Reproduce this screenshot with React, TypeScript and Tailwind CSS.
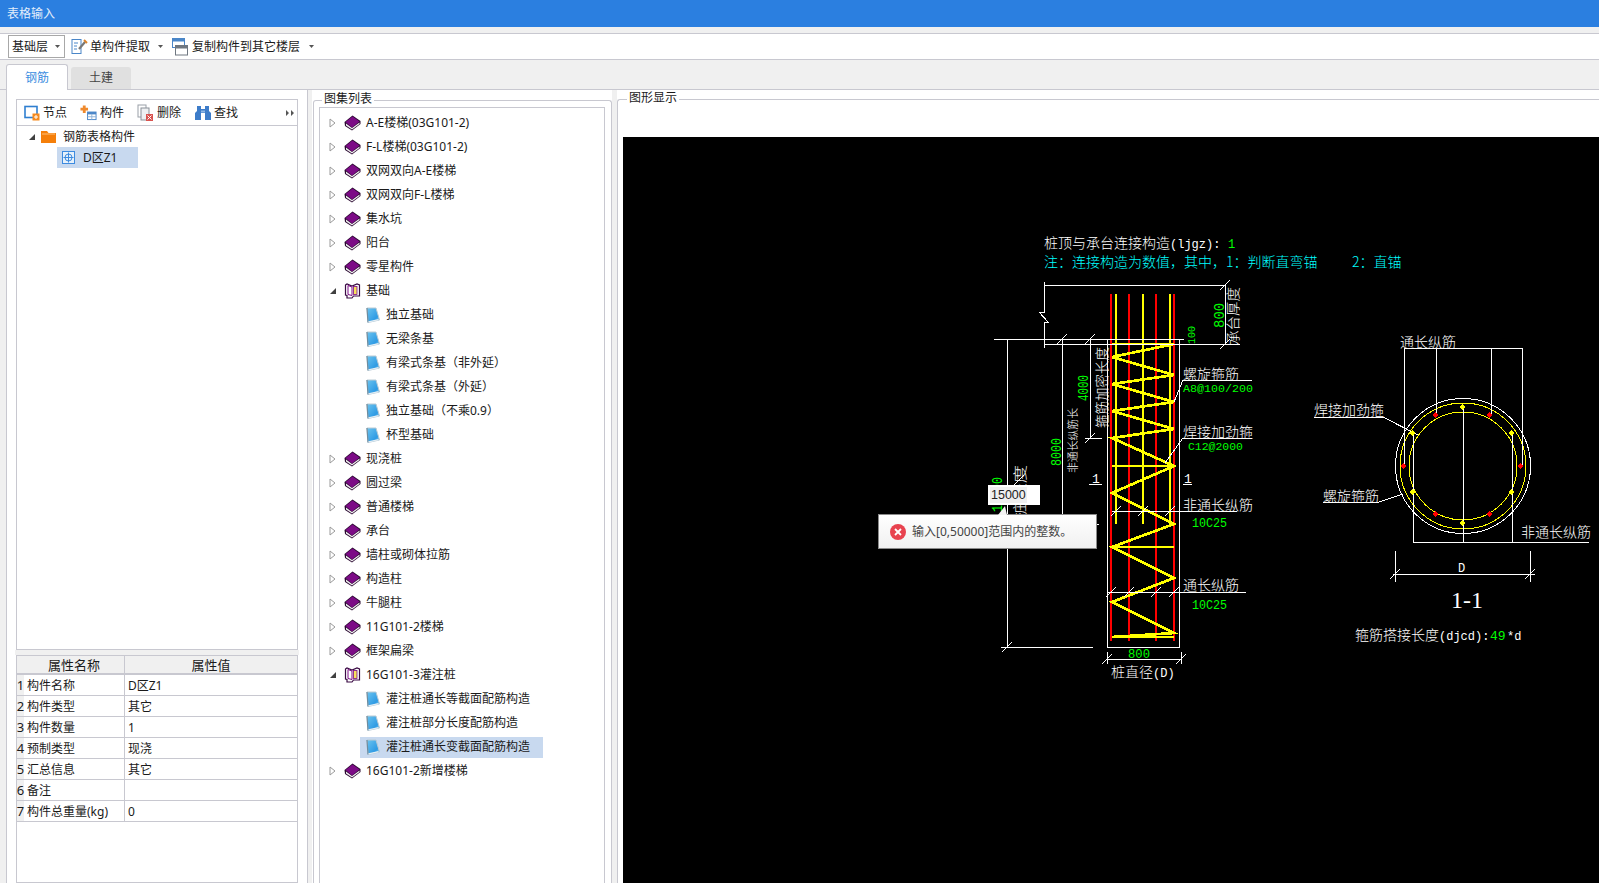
import React from 'react'

const uiFont = "font-['Noto_Sans','Noto_Sans_CJK_SC',sans-serif]"

const BookIcon = () => (
    <svg width="17" height="16" viewBox="0 0 17 16" className="shrink-0">
        <path d="M0.5 7 L8.5 0.5 L16.5 6 L16.5 9 L8 15.5 L1 11 Z" fill="#2a0a30" />
        <path d="M1.5 7 L8.5 1.5 L15.5 6.5 L8 12.5 Z" fill="#7c0b86" />
        <path d="M2 8.5 L8 13 L15.5 7.5 L15.5 9 L8 14.5 L2 10.5 Z" fill="#f2eef2" />
    </svg>
)

const OpenBookIcon = () => (
    <svg width="17" height="16" viewBox="0 0 17 16" className="shrink-0">
        <path d="M1.5 2 L3 1 L8 3 L13 1 L15.5 2 L15.5 13 L9.5 13 L8 15 L3 15 L3 12.5 L1.5 12 Z" fill="#fff" stroke="#3a0a44" strokeWidth="1.2" />
        <path d="M4 2.5 L8 4 L8 12.5 L4 11.5 Z" fill="#fff" stroke="#7c0b86" />
        <rect x="9.5" y="3.5" width="3.5" height="8" fill="#f7e25c" stroke="#7c0b86" strokeWidth="0.8" />
    </svg>
)

const PageIcon = () => (
    <svg width="14" height="16" viewBox="0 0 14 16" className="shrink-0">
        <defs>
            <linearGradient id="pageFill" x1="0" y1="0" x2="1" y2="1">
                <stop offset="0" stopColor="#6cc4ef" />
                <stop offset="0.7" stopColor="#2f9be4" />
                <stop offset="1" stopColor="#8fd0f0" />
            </linearGradient>
        </defs>
        <path d="M1 1 L10 1 L13.5 13 L2 15.5 Z" fill="url(#pageFill)" stroke="#b9cad4" />
        <path d="M1 1 L2 15.5" stroke="#6f8c9e" strokeWidth="1.2" />
        <path d="M2.5 14.8 L12.5 12.7" stroke="#e4eef4" strokeWidth="1.2" />
    </svg>
)

const Caret = () => (
    <svg width="5" height="3" viewBox="0 0 5 3" className="shrink-0">
        <path d="M0 0 H5 L2.5 3 Z" fill="#555" />
    </svg>
)

const TreeOpen = () => (
    <svg width="8" height="8" viewBox="0 0 8 8" className="shrink-0">
        <path d="M7 1 V7 H1 Z" fill="#404040" />
    </svg>
)

const TreeClosed = () => (
    <svg width="7" height="10" viewBox="0 0 7 10" className="shrink-0">
        <path d="M1 1 L6 5 L1 9 Z" fill="#fff" stroke="#9a9a9a" />
    </svg>
)

const NodeIcon = () => (
    <svg width="16" height="16" viewBox="0 0 16 16">
        <rect x="1" y="1.5" width="12" height="11" fill="#fff" stroke="#2f7fd0" strokeWidth="1.6" />
        <rect x="8.5" y="8.5" width="7" height="7" fill="#f58a1f" />
        <path d="M12 10 V14 M10 12 H14" stroke="#fff" />
    </svg>
)

const PartIcon = () => (
    <svg width="18" height="17" viewBox="0 0 18 17">
        <path d="M3 1 H6 V3.5 H8.5 V6.5 H6 V9 H3 V6.5 H0.5 V3.5 H3 Z" fill="#ef8a2d" />
        <rect x="8" y="8" width="9" height="8" fill="#fff" stroke="#4a86c8" />
        <rect x="8" y="8" width="9" height="2.5" fill="#4a86c8" />
        <path d="M8 13 H17 M12.5 10 V16" stroke="#8eb2d8" />
    </svg>
)

const DeleteIcon = () => (
    <svg width="17" height="18" viewBox="0 0 17 18">
        <rect x="1" y="1" width="8" height="12" fill="#fff" stroke="#9aa0a8" />
        <rect x="4" y="4" width="8" height="12" fill="#eef0f2" stroke="#8a9098" />
        <rect x="9" y="10" width="7" height="7" fill="#d9534f" />
        <path d="M10.5 11.5 L14.5 15.5 M14.5 11.5 L10.5 15.5" stroke="#fff" />
    </svg>
)

const FindIcon = () => (
    <svg width="16" height="16" viewBox="0 0 16 16">
        <path d="M2 1 H6 V4 H10 V1 H14 V6 L16 8 V15 H10 V8 H6 V15 H0 V8 L2 6 Z" fill="#3d7cc9" />
        <rect x="6" y="5.5" width="4" height="2" fill="#8db6e4" />
    </svg>
)

const ExtractIcon = () => (
    <svg width="17" height="17" viewBox="0 0 17 17">
        <rect x="1" y="1.5" width="9" height="14" fill="#fff" stroke="#4a86c8" />
        <path d="M3 5 H7 M3 8 H6 M3 11 H6" stroke="#4a86c8" />
        <path d="M8 11 L14 4" stroke="#777" strokeWidth="2.2" />
        <path d="M13 2 L16 5" stroke="#d9822b" strokeWidth="2" />
    </svg>
)

const CopyIcon = () => (
    <svg width="16" height="18" viewBox="0 0 16 18">
        <rect x="0.5" y="0.5" width="12" height="9" fill="#fff" stroke="#4a86c8" />
        <rect x="0.5" y="0.5" width="12" height="3" fill="#4a86c8" />
        <rect x="3.5" y="7.5" width="12" height="9.5" fill="#fff" stroke="#6f7780" />
        <rect x="3.5" y="7.5" width="12" height="3" fill="#6f7780" />
    </svg>
)

const treeItems: { label: string; level: 'closed' | 'open' | 'child'; selected?: boolean }[] = [
    { label: 'A-E楼梯(03G101-2)', level: 'closed' },
    { label: 'F-L楼梯(03G101-2)', level: 'closed' },
    { label: '双网双向A-E楼梯', level: 'closed' },
    { label: '双网双向F-L楼梯', level: 'closed' },
    { label: '集水坑', level: 'closed' },
    { label: '阳台', level: 'closed' },
    { label: '零星构件', level: 'closed' },
    { label: '基础', level: 'open' },
    { label: '独立基础', level: 'child' },
    { label: '无梁条基', level: 'child' },
    { label: '有梁式条基（非外延）', level: 'child' },
    { label: '有梁式条基（外延）', level: 'child' },
    { label: '独立基础（不乘0.9）', level: 'child' },
    { label: '杯型基础', level: 'child' },
    { label: '现浇桩', level: 'closed' },
    { label: '圆过梁', level: 'closed' },
    { label: '普通楼梯', level: 'closed' },
    { label: '承台', level: 'closed' },
    { label: '墙柱或砌体拉筋', level: 'closed' },
    { label: '构造柱', level: 'closed' },
    { label: '牛腿柱', level: 'closed' },
    { label: '11G101-2楼梯', level: 'closed' },
    { label: '框架扁梁', level: 'closed' },
    { label: '16G101-3灌注桩', level: 'open' },
    { label: '灌注桩通长等截面配筋构造', level: 'child' },
    { label: '灌注桩部分长度配筋构造', level: 'child' },
    { label: '灌注桩通长变截面配筋构造', level: 'child', selected: true },
    { label: '16G101-2新增楼梯', level: 'closed' },
]

const props = [
    ['构件名称', 'D区Z1'],
    ['构件类型', '其它'],
    ['构件数量', '1'],
    ['预制类型', '现浇'],
    ['汇总信息', '其它'],
    ['备注', ''],
    ['构件总重量(kg)', '0'],
]

const TreeRow = ({ item }: { item: (typeof treeItems)[number] }) => {
    if (item.level === 'child') {
        return (
            <div className="h-[24px] flex items-center pl-[40px]">
                <div className={`h-[21px] w-auto flex items-center pl-[6px] pr-[13px] ${item.selected ? 'bg-[#c8d9ef]' : ''}`}>
                    <PageIcon />
                    <span className="ml-[6px]">{item.label}</span>
                </div>
            </div>
        )
    }
    return (
        <div className="h-[24px] flex items-center pl-[9px]">
            <span className="w-[16px] flex">{item.level === 'open' ? <TreeOpen /> : <TreeClosed />}</span>
            <span className="ml-[-1px]">{item.level === 'open' ? <OpenBookIcon /> : <BookIcon />}</span>
            <span className="ml-[5px]">{item.label}</span>
        </div>
    )
}

const ToolBtn = ({ icon, label }: { icon: React.ReactNode; label: string }) => (
    <div className="flex items-center gap-[3px] w-[57px]">
        <span className="w-[17px] flex justify-center">{icon}</span>
        <span>{label}</span>
    </div>
)

// drawing helpers, coordinates are page pixels (see viewBox)
const W = ({ d, c = '#fff', w = 1 }: { d: string; c?: string; w?: number }) => (
    <path d={d} fill="none" stroke={c} strokeWidth={w} />
)

const ticks = (pts: [number, number][]) => pts.map(([x, y]) => `M${x - 5} ${y + 5} L${x + 5} ${y - 5}`).join(' ')

const diamond = (x: number, y: number) => `M${x - 3} ${y} L${x} ${y - 3} L${x + 3} ${y} L${x} ${y + 3} Z`

const T = ({ x, y, c = '#fff', s = 14, mono, serif, rot, len, children }: {
    x: number
    y: number
    c?: string
    s?: number
    mono?: boolean
    serif?: boolean
    rot?: boolean
    len?: number
    children: React.ReactNode
}) => (
    <text
        x={x}
        y={y}
        fill={c}
        fontSize={s}
        fontFamily={serif ? "'Liberation Serif', serif" : mono ? "'Liberation Mono', monospace" : "'Noto Sans CJK SC', sans-serif"}
        fontWeight={300}
        textLength={len}
        lengthAdjust={len ? 'spacingAndGlyphs' : undefined}
        transform={rot ? `rotate(-90 ${x} ${y})` : undefined}
    >
        {children}
    </text>
)

const Drawing = () => (
    <svg viewBox="623 137 976 746" width="976" height="746" className="block" shapeRendering="crispEdges">
        {/* heading notes */}
        <T x={1044} y={248}>桩顶与承台连接构造</T>
        <T x={1170} y={248} mono s={12}>(ljgz):</T>
        <T x={1228} y={248} c="#00ff00" mono s={12}>1</T>
        <T x={1044} y={267} c="#00ffff">注：连接构造为数值，其中，</T>
        <T x={1226} y={267} c="#00ffff">1：判断直弯锚</T>
        <T x={1352} y={267} c="#00ffff">2：直锚</T>

        {/* pile elevation: rebars */}
        <W c="#ff0000" w={2} d="M1111 294 V641 M1129 294 V641 M1156 294 V641 M1174 294 V641" />
        <W c="#ffff00" w={2} d="M1116 294 V524 M1143 294 V524 M1170 294 V524" />
        <W
            c="#ffff00"
            w={2.7}
            d="M1112 344 H1174 L1112 357 L1174 375 L1112 384 L1174 402 L1112 411 L1174 429 L1112 438 L1174 466 L1112 493 L1174 524 L1112 547 L1174 578 L1112 602 L1174 633 L1112 637 H1174 M1112 466 H1174 M1112 547 H1174"
        />

        {/* pile elevation: frame and dimensions */}
        <W d="M1107 339 H1179 V647 H1107 Z" />
        <W d="M1044 282 V312 H1039 L1048 322 H1044 V348 M1044 285 H1225 M1044 344 H1240 M1225 285 V344 M994 339 H1107 M1179 339 H1184" />
        <W d="M1007 339 V647 M1001 647 H1093 M1062 339 V524 M1090 339 V438 M1085 438 H1102 M1090 524 H1099" />
        <W d={ticks([[1062, 339], [1090, 339], [1090, 438], [1007, 647], [1225, 285], [1225, 344], [1019, 480]])} />
        <W d="M1112 511 H1237 M1108 592 H1246" />
        <W d={ticks([[1116, 511], [1143, 511], [1170, 511], [1111, 592], [1129, 592], [1156, 592], [1174, 592]])} />
        <W d="M1107 652 V664 M1181 652 V664 M1107 659 H1181" />
        <W d={ticks([[1107, 659], [1181, 659]])} />
        <W d="M1183 380 H1252 M1183 380 L1174 402 M1183 438 H1252 M1183 438 L1165 463 M1089 484 H1102 M1183 484 H1192" />

        {/* pile elevation: labels */}
        <T x={1238} y={345} rot len={58}>承台厚度</T>
        <T x={1224} y={328} rot c="#00ff00" mono s={14}>800</T>
        <T x={1195} y={344} rot c="#00ff00" mono s={10}>100</T>
        <T x={1107} y={428} rot len={81}>箍筋加密长度</T>
        <T x={1088} y={401} rot c="#00ff00" mono s={14} len={26}>4000</T>
        <T x={1077} y={473} rot s={11} len={65}>非通长纵筋长</T>
        <T x={1061} y={466} rot c="#00ff00" mono s={14} len={28}>8000</T>
        <T x={1025} y={520} rot len={55}>桩长度</T>
        <T x={1002} y={512} rot c="#00ff00" mono s={14} len={35}>15000</T>
        <T x={1092} y={483} mono s={13}>1</T>
        <T x={1184} y={483} mono s={13}>1</T>
        <T x={1183} y={379}>螺旋箍筋</T>
        <T x={1183} y={392} c="#00ff00" mono s={11} len={70}>A8@100/200</T>
        <T x={1183} y={437}>焊接加劲箍</T>
        <T x={1188} y={450} c="#00ff00" mono s={11} len={55}>C12@2000</T>
        <T x={1183} y={510}>非通长纵筋</T>
        <T x={1192} y={527} c="#00ff00" mono s={12} len={35}>10C25</T>
        <T x={1183} y={590}>通长纵筋</T>
        <T x={1192} y={609} c="#00ff00" mono s={12} len={35}>10C25</T>
        <T x={1128} y={658} c="#00ff00" mono s={12} len={22}>800</T>
        <T x={1111} y={677}>桩直径</T>
        <T x={1153} y={677} mono s={12}>(D)</T>

        {/* section 1-1 */}
        <circle cx="1463" cy="466" r="67.5" fill="none" stroke="#fff" />
        <circle cx="1463" cy="466" r="63" fill="none" stroke="#ffff00" />
        <circle cx="1463" cy="466" r="54" fill="none" stroke="#ffff00" />
        <W d="M1404 466 V348 H1522 V466 M1436 348 V415 M1491 348 V415" />
        <W d="M1413 433 V542 M1463 407 V542 M1512 433 V542 M1413 542 H1589" />
        <W d="M1314 417 H1383 L1418 435 M1323 502 H1379 L1403 494" />
        <W d="M1395 551 V582 M1530 551 V582 M1393 574 H1535" />
        <W d={ticks([[1395, 574], [1530, 574]])} />
        {[[1403, 466], [1435, 415], [1489, 415], [1520, 466], [1435, 514], [1489, 514]].map(([x, y]) => (
            <path key={`r${x}${y}`} d={diamond(x, y)} fill="#ff0000" />
        ))}
        {[[1462, 407], [1412, 433], [1511, 433], [1412, 492], [1511, 492], [1462, 523]].map(([x, y]) => (
            <path key={`y${x}${y}`} d={diamond(x, y)} fill="#ffff00" />
        ))}
        <T x={1400} y={347}>通长纵筋</T>
        <T x={1314} y={415}>焊接加劲箍</T>
        <T x={1323} y={501}>螺旋箍筋</T>
        <T x={1521} y={537}>非通长纵筋</T>
        <T x={1458} y={572} mono s={12}>D</T>
        <T x={1451} y={608} s={24} serif len={32}>1-1</T>
        <T x={1355} y={640}>箍筋搭接长度</T>
        <T x={1439} y={640} mono s={12}>(djcd):</T>
        <T x={1490} y={640} c="#00ff00" mono s={13}>49</T>
        <T x={1507} y={640} mono s={12}>*d</T>
    </svg>
)

const App = () => {
    return (
        <div className={`h-screen w-full overflow-hidden flex flex-col bg-[#f0f0f0] text-[12px] leading-none text-[#1a1a1a] ${uiFont}`}>
            <div className="h-[27px] shrink-0 bg-[#2b7fe0] text-[#e3eefb] flex items-center pl-[7px] pt-[1px]">表格输入</div>

            {/* toolbar */}
            <div className="mt-[6px] h-[27px] shrink-0 bg-white border-y border-[#c8c8d0] flex items-center pl-[2px]">
                <div className="ml-[6px] w-[57px] h-[23px] border border-[#a8a8a8] flex items-center pl-[3px] gap-[7px]">
                    <span>基础层</span>
                    <Caret />
                </div>
                <div className="ml-[6px] flex items-center">
                    <ExtractIcon />
                    <span className="ml-[2px]">单构件提取</span>
                    <span className="ml-[8px]"><Caret /></span>
                </div>
                <div className="ml-[9px] flex items-center">
                    <CopyIcon />
                    <span className="ml-[4px]">复制构件到其它楼层</span>
                    <span className="ml-[9px]"><Caret /></span>
                </div>
            </div>

            {/* tabs */}
            <div className="h-[30px] shrink-0 border-b border-[#c8c8d0] flex items-end pl-[6px]">
                <div className="w-[62px] h-[26px] mb-[-1px] bg-white border border-b-0 border-[#c8c8d0] rounded-t-[3px] text-[#3b8de0] flex items-center justify-center">钢筋</div>
                <div className="ml-[3px] w-[60px] h-[22px] bg-[#e0e0e0] rounded-t-[3px] text-[#444] flex items-center justify-center">土建</div>
            </div>

            {/* body */}
            <div className="flex-1 min-h-0 flex">
                <div className="ml-[6px] w-[302px] shrink-0 bg-white border-x border-[#c8c8d0] pl-[9px] pr-[9px] pt-[9px] flex flex-col">
                    <div className="h-[27px] shrink-0 border border-[#c8c8d0] flex items-center pl-[6px] relative">
                        <ToolBtn icon={<NodeIcon />} label="节点" />
                        <ToolBtn icon={<PartIcon />} label="构件" />
                        <ToolBtn icon={<DeleteIcon />} label="删除" />
                        <ToolBtn icon={<FindIcon />} label="查找" />
                        <svg width="8" height="6" viewBox="0 0 8 6" className="ml-auto mr-[3px]">
                            <path d="M0 0 L3 3 L0 6 Z M5 0 L8 3 L5 6 Z" fill="#555" />
                        </svg>
                    </div>
                    <div className="h-[524px] shrink-0 border border-t-0 border-[#c8c8d0]">
                        <div className="h-[21px] flex items-center pl-[11px]">
                            <TreeOpen />
                            <svg width="15" height="13" viewBox="0 0 15 13" className="ml-[5px]">
                                <path d="M0 1 H6 L7.5 3 H15 V13 H0 Z" fill="#f57f0a" />
                                <path d="M1 4 H14" stroke="#ffc27a" />
                            </svg>
                            <span className="ml-[7px]">钢筋表格构件</span>
                        </div>
                        <div className="ml-[40px] w-[81px] h-[21px] bg-[#c8d9ef] flex items-center pl-[5px]">
                            <svg width="13" height="13" viewBox="0 0 13 13">
                                <rect x="0.5" y="0.5" width="12" height="12" fill="#e6f1fb" stroke="#3d8be0" />
                                <circle cx="6.5" cy="6.5" r="3.5" fill="none" stroke="#3d8be0" />
                                <path d="M6.5 1.5 V11.5 M1.5 6.5 H11.5" stroke="#3d8be0" />
                            </svg>
                            <span className="ml-[8px]">D区Z1</span>
                        </div>
                    </div>
                    <div className="h-[5px] shrink-0 bg-[#f0f0f0] -mx-[1px]" />
                    <div className="flex-1 min-h-0 border border-[#c8c8d0]">
                        <div className="flex h-[19px] bg-[#f0f0f0] border-b-2 border-[#c8c8d0]">
                            <div className="w-[7px] shrink-0" />
                            <div className="w-[101px] shrink-0 border-r border-[#c8c8d0] flex items-center justify-center pt-[1px] text-[13px]">属性名称</div>
                            <div className="flex-1 flex items-center justify-center pt-[1px] text-[13px]">属性值</div>
                        </div>
                        {props.map(([name, value], i) => (
                            <div key={name} className="flex h-[21px] border-b border-[#c8c8d0]">
                                <div className="w-[7px] shrink-0 bg-[#f0f0f0] flex items-center justify-center pt-[1px] text-[13px]">{i + 1}</div>
                                <div className="w-[101px] shrink-0 border-r border-[#c8c8d0] flex items-center pl-[3px] pt-[1px]">{name}</div>
                                <div className="flex-1 flex items-center pl-[3px] pt-[1px]">{value}</div>
                            </div>
                        ))}
                    </div>
                </div>

                {/* 图集列表 */}
                <div className="ml-[4px] w-[300px] shrink-0 bg-white pl-[1px] pt-[10px] flex flex-col">
                    <div className="flex-1 min-h-0 border border-b-0 border-[#c8c8d0] rounded-t-[3px] pl-[5px] pr-[6px] pt-[6px] relative flex flex-col">
                        <span className="absolute left-[8px] top-[-8px] bg-white px-[2px]">图集列表</span>
                        <div className="flex-1 min-h-0 border border-b-0 border-[#c8c8d0] pt-[3px]">
                            {treeItems.map(item => (
                                <TreeRow key={item.label} item={item} />
                            ))}
                        </div>
                    </div>
                </div>

                {/* 图形显示 */}
                <div className="ml-[5px] flex-1 min-w-0 bg-white pt-[9px] flex flex-col">
                    <div className="flex-1 min-h-0 border-t border-l border-[#c8c8d0] rounded-tl-[3px] pl-[5px] pt-[37px] relative flex flex-col">
                        <span className="absolute left-[9px] top-[-8px] bg-white px-[2px]">图形显示</span>
                        <div className="flex-1 min-h-0 bg-black relative overflow-hidden">
                            <Drawing />
                            <div className="absolute left-[365px] top-[348px] w-[52px] h-[20px] bg-white flex items-center pl-[2px]">
                                <span className="bg-[#efefef] px-[1px] py-[2px] text-[12.5px] text-[#222] font-['Liberation_Sans',sans-serif]">15000</span>
                            </div>
                            <div className="absolute left-[255px] top-[377px] w-[219px] h-[35px] bg-gradient-to-b from-white to-[#f0f0f0] border border-[#8a8a8a] flex items-center pl-[11px] text-[#444]">
                                <svg width="16" height="16" viewBox="0 0 16 16" className="shrink-0">
                                    <circle cx="8" cy="8" r="8" fill="#e8434f" />
                                    <path d="M5 5 L11 11 M11 5 L5 11" stroke="#fff" strokeWidth="1.8" />
                                </svg>
                                <span className="ml-[6px] pt-[1px]">输入[0,50000]范围内的整数。</span>
                            </div>
                            <svg width="9" height="9" viewBox="0 0 9 9" className="absolute left-[375px] top-[369px]">
                                <path d="M0 9 L7 0 L9 9 Z" fill="#f4f4f4" />
                            </svg>
                        </div>
                    </div>
                </div>
            </div>
        </div>
    )
}

export default App
